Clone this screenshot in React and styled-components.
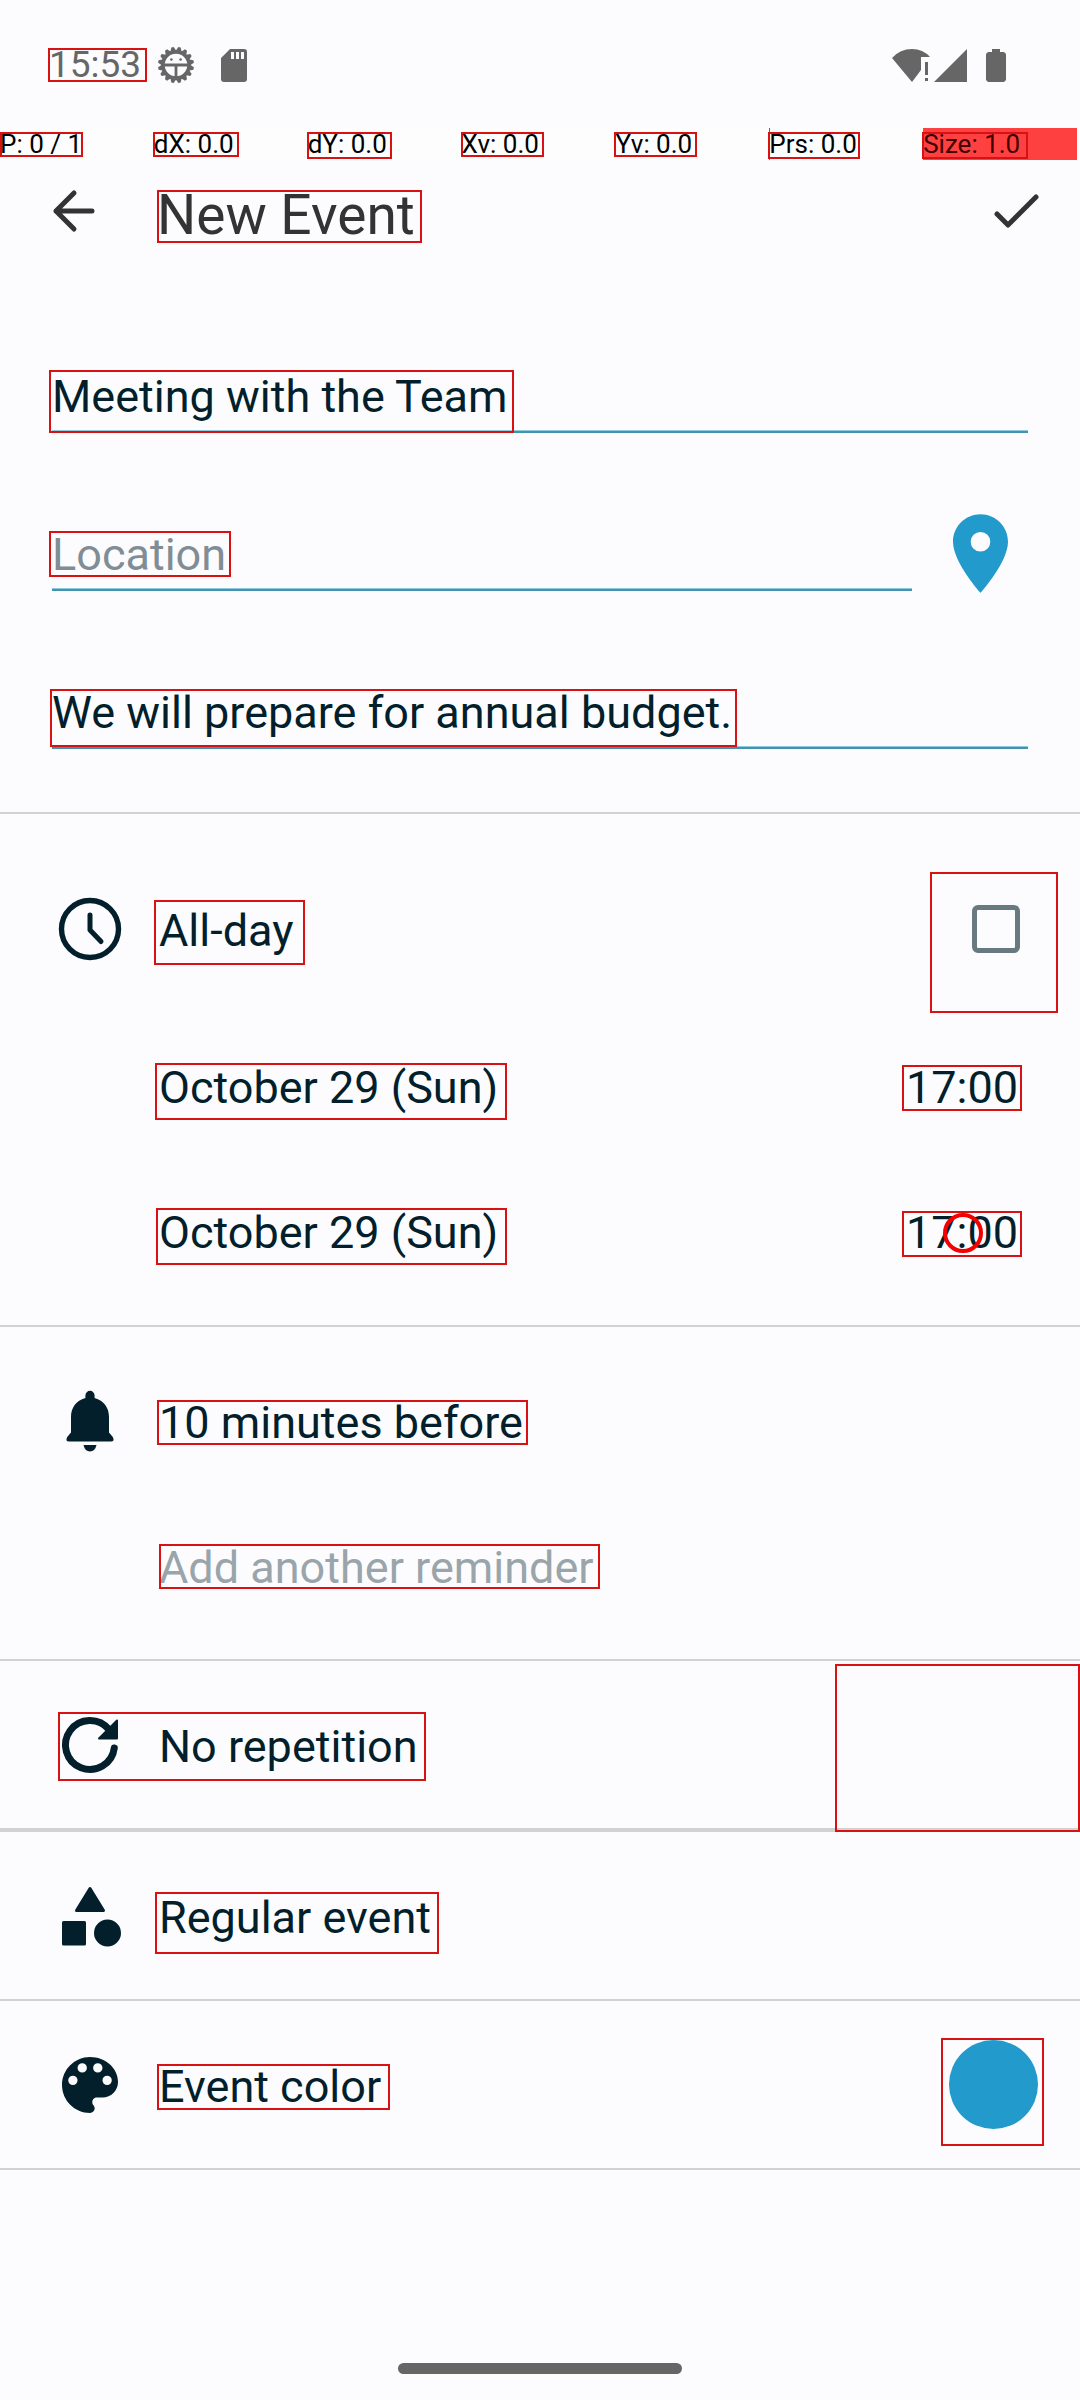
import React, { useState } from "react";
import styled, { createGlobalStyle } from "styled-components";

const ink = "#021f2b";
const accent = "#229acb";
const system = "#666666";
const line = "#d2d2d4";
const highlight = "#d81212";

const GlobalStyle = createGlobalStyle`
  * { box-sizing: border-box; }
  body {
    margin: 0;
    background: #fcfcff;
    color: ${ink};
    font-family: Roboto, "Liberation Sans", sans-serif;
  }
  button, input { font: inherit; color: inherit; }
`;

const Screen = styled.div`
  display: flex;
  flex-direction: column;
  min-height: 100vh;
`;

/* Outline laid over the element that contains it. */
const Mark = styled.span`
  position: absolute;
  inset: ${(p) => p.$inset};
  width: ${(p) => (p.$width ? `${p.$width}px` : "auto")};
  border: 2px solid ${highlight};
  pointer-events: none;
`;

const StatusBar = styled.header`
  display: flex;
  align-items: center;
  justify-content: space-between;
  height: 128px;
  padding: 2px 74px 0 49px;
  color: ${system};
`;

const StatusGroup = styled.div`
  display: flex;
  align-items: center;
  gap: ${(p) => p.$gap}px;
`;

const Clock = styled.time`
  position: relative;
  font-size: 37px;
  line-height: 44px;
`;

const PointerBar = styled.div`
  display: grid;
  grid-template-columns: repeat(7, 1fr);
  height: 32px;
  padding-right: 3px;
  background: #fdfdfe;
  color: #000;
  font-size: 26px;
  line-height: 32px;
`;

const PointerCell = styled.div`
  background: ${(p) => (p.$full ? "#ff4040" : "transparent")};
  color: ${(p) => (p.$full ? "#400000" : "inherit")};
  box-shadow: ${(p) => (p.$edge ? "inset 1px 0 #c04040" : "none")};
`;

const PointerText = styled.span`
  position: relative;
  display: inline-block;
`;

const AppBar = styled.div`
  display: flex;
  align-items: center;
  height: 102px;
  padding: 0 32px 0 42px;
  color: #333;
`;

const IconButton = styled.button`
  display: grid;
  place-items: center;
  width: 64px;
  height: 64px;
  padding: 0;
  border: 0;
  background: none;
`;

const Title = styled.h1`
  position: relative;
  margin: 8px auto 0 51px;
  font-size: 55px;
  font-weight: 400;
  line-height: 64px;
`;

const Form = styled.form`
  display: flex;
  flex-direction: column;
`;

const Fields = styled.div`
  display: flex;
  flex-direction: column;
  gap: 95px;
  padding: 108px 52px 63px;
  border-bottom: 2px solid ${line};
`;

const FieldRow = styled.div`
  display: flex;
  gap: 20px;
`;

const Field = styled.label`
  position: relative;
  display: block;
  flex: 1;
`;

const TextInput = styled.input`
  display: block;
  width: 100%;
  height: 63px;
  padding: 0 0 8px;
  border: 0;
  border-bottom: 2px solid #4392b0;
  box-shadow: inset 0 -1px #8fcade;
  border-radius: 0;
  outline: 0;
  background: none;
  font-size: 45px;
  line-height: 52px;
  &::placeholder { color: #808d94; opacity: 1; }
`;

const PinButton = styled.button`
  display: grid;
  place-items: center;
  width: 96px;
  height: 79px;
  margin: -14px 0 -2px;
  padding: 0;
  border: 0;
  background: none;
  color: ${accent};
`;

const Section = styled.section`
  display: flex;
  flex-direction: column;
  padding: ${(p) => p.$pad || "0"};
  border-bottom: ${(p) => (p.$thick ? 4 : 2)}px solid ${line};
`;

const Row = styled.div`
  position: relative;
  display: flex;
  align-items: center;
  justify-content: space-between;
  height: ${(p) => p.$height || 145}px;
  padding: 0 ${(p) => p.$end || 62}px 0 58px;
`;

const Lead = styled.div`
  position: relative;
  display: grid;
  grid-template-columns: 64px auto;
  column-gap: 37px;
  align-items: center;
  height: 64px;
`;

const textStyle = `
  position: relative;
  display: block;
  grid-column: 2;
  margin: 4px 0 0;
  padding: 0;
  border: 0;
  background: none;
  font-size: 45px;
  line-height: 52px;
  text-align: left;
  white-space: nowrap;
`;

const RowLabel = styled.label`
  ${textStyle}
`;

const RowButton = styled.button`
  ${textStyle}
  color: ${(p) => (p.$muted ? "#99a5aa" : ink)};
`;

const CheckWrap = styled.span`
  position: relative;
  display: block;
`;

const Checkbox = styled.input`
  display: block;
  appearance: none;
  width: 48px;
  height: 48px;
  margin: 0;
  border: 5px solid #687980;
  border-radius: 6px;
  &:checked { background: ${accent}; }
`;

const Touch = styled.span`
  position: absolute;
  top: 6px;
  left: 37px;
  width: 40px;
  height: 40px;
  border: 4px solid #f40000;
  border-radius: 50%;
  pointer-events: none;
`;

const Swatch = styled.button`
  position: relative;
  width: 89px;
  height: 89px;
  padding: 0;
  border: 0;
  border-radius: 50%;
  background: ${accent};
`;

const HomeArea = styled.footer`
  display: flex;
  justify-content: center;
  margin-top: auto;
  padding: 26px;
`;

const HomeBar = styled.div`
  width: 284px;
  height: 11px;
  border-radius: 6px;
  background: ${system};
`;

const teeth = Array.from({ length: 16 }, (_, i) => i * 22.5 + 11.25);

const BugIcon = () => (
  <svg width="38" height="38" viewBox="-19 -19 38 38" fill="none" stroke="currentColor" aria-hidden="true">
    {teeth.map((a) => (
      <path key={a} d="M-3.4 -13L-1.2 -18H1.2L3.4 -13Z" fill="currentColor" stroke="none" transform={`rotate(${a})`} />
    ))}
    <circle r="13" strokeWidth="3.4" />
    <path d="M-13 0H13M0 0V13" strokeWidth="2.8" />
    <circle cx="-4.6" cy="-5.5" r="1.3" fill="currentColor" stroke="none" />
    <circle cx="4.6" cy="-5.5" r="1.3" fill="currentColor" stroke="none" />
  </svg>
);

const SdIcon = () => (
  <svg width="26" height="33" viewBox="0 0 26 33" aria-hidden="true">
    <path
      fill="currentColor"
      fillRule="evenodd"
      d="M9 0H23Q26 0 26 3V30Q26 33 23 33H3Q0 33 0 30V9ZM10 3V10H13V3ZM15 3V10H18V3ZM20 3V10H23V3Z"
    />
  </svg>
);

const NetworkIcon = () => (
  <svg width="76" height="33" viewBox="0 0 76 33" fill="currentColor" aria-hidden="true">
    <path d="M0 9Q8 0 20 0Q31 0 38 8H29V21L20 33Z" />
    <path d="M33 13H36V26H33ZM33 29H36V32H33Z" />
    <path d="M75 0V33H42Z" />
  </svg>
);

const BatteryIcon = () => (
  <svg width="20" height="33" viewBox="0 0 20 33" fill="currentColor" aria-hidden="true">
    <path d="M6 0H14V3H18L20 5V31L18 33H2L0 31V5L2 3H6Z" />
  </svg>
);

const BackIcon = () => (
  <svg width="64" height="64" viewBox="0 0 64 64" fill="none" stroke="currentColor" strokeWidth="5" strokeLinecap="round" strokeLinejoin="round" aria-hidden="true">
    <path d="M50 32H14M32 14L14 32L32 50" />
  </svg>
);

const CheckIcon = () => (
  <svg width="64" height="64" viewBox="0 0 64 64" fill="none" stroke="currentColor" strokeWidth="5" strokeLinecap="round" strokeLinejoin="round" aria-hidden="true">
    <path d="M13 35L24 46L52 18" />
  </svg>
);

const PinIcon = () => (
  <svg width="55" height="79" viewBox="5 2 14 20" fill="currentColor" aria-hidden="true">
    <path fillRule="evenodd" d="M12 2C8.13 2 5 5.13 5 9c0 5.25 7 13 7 13s7-7.75 7-13c0-3.87-3.13-7-7-7zm0 9.5a2.5 2.5 0 0 1 0-5 2.5 2.5 0 0 1 0 5z" />
  </svg>
);

const ClockIcon = () => (
  <svg width="64" height="64" viewBox="0 0 64 64" fill="none" stroke="currentColor" strokeWidth="5" strokeLinecap="round" strokeLinejoin="round" aria-hidden="true">
    <circle cx="32" cy="32" r="28.5" strokeWidth="5.4" />
    <path d="M32 18V33L43 44.5" />
  </svg>
);

const BellIcon = () => (
  <svg width="64" height="64" viewBox="0 0 64 64" fill="currentColor" aria-hidden="true">
    <path d="M27.4 9V6.4A4.6 4.6 0 0 1 36.6 6.4V9C46 11.500 51 19 51 28V43.500L54.800 48Q57 52.500 53 52.500H11Q7 52.500 9.200 48L13 43.500V28C13 19 18 11.500 27.400 9Z" />
    <path d="M25.500 56H38.500Q37 62.500 32 62.500Q27 62.500 25.500 56Z" />
  </svg>
);

const RepeatIcon = () => (
  <svg width="64" height="64" viewBox="0 0 64 64" fill="none" stroke="currentColor" strokeLinecap="round" strokeLinejoin="round" aria-hidden="true">
    <path strokeWidth="7" d="M56.300 35A24.500 24.500 0 1 1 51 16.500" />
    <path fill="currentColor" strokeWidth="2" d="M59 7.500V25.500H41Z" />
  </svg>
);

const ShapesIcon = () => (
  <svg width="64" height="64" viewBox="0 0 64 64" fill="currentColor" stroke="currentColor" strokeWidth="3" strokeLinejoin="round" aria-hidden="true">
    <path d="M32 4.500L45.500 26.500H18.500ZM5.500 38.500H26.500V60H5.500Z" />
    <circle cx="49.500" cy="49" r="12" />
  </svg>
);

const PaletteIcon = () => (
  <svg width="64" height="64" viewBox="1.71 1.71 20.57 20.57" fill="currentColor" aria-hidden="true">
    <path
      fillRule="evenodd"
      d="M12 3c-4.970 0-9 4.030-9 9s4.030 9 9 9c.83 0 1.500-.67 1.500-1.500 0-.39-.15-.74-.39-1.010-.23-.26-.38-.61-.38-.99 0-.83.67-1.500 1.500-1.500H16c2.760 0 5-2.240 5-5 0-4.420-4.030-8-9-8zM6.500 12a1.500 1.500 0 1 1 0-3 1.500 1.500 0 0 1 0 3zM9.500 8a1.500 1.500 0 1 1 0-3 1.500 1.500 0 0 1 0 3zM14.500 8a1.500 1.500 0 1 1 0-3 1.500 1.500 0 0 1 0 3zM17.500 12a1.500 1.500 0 1 1 0-3 1.500 1.500 0 0 1 0 3z"
    />
  </svg>
);

const pointer = [
  { text: "P: 0 / 1", inset: "4px -1px 3px 0" },
  { text: "dX: 0.0", inset: "4px -5px 3px -1px" },
  { text: "dY: 0.0", inset: "4px -5px 1px -1px" },
  { text: "Xv: 0.0", inset: "4px -5px 3px -1px" },
  { text: "Yv: 0.0", inset: "4px -5px 3px -1px" },
  { text: "Prs: 0.0", inset: "4px -3px 1px -1px", edge: true },
  { text: "Size: 1.0", inset: "4px -8px 1px -1px", full: true },
];

export default function App() {
  const [title, setTitle] = useState("Meeting with the Team");
  const [location, setLocation] = useState("");
  const [notes, setNotes] = useState("We will prepare for annual budget.");

  return (
    <Screen>
      <GlobalStyle />
      <StatusBar>
        <StatusGroup $gap={26}>
          <StatusGroup $gap={16}>
            <Clock>
              15:53
              <Mark $inset="5px -6px 5px -1px" />
            </Clock>
            <BugIcon />
          </StatusGroup>
          <SdIcon />
        </StatusGroup>
        <StatusGroup $gap={18}>
          <NetworkIcon />
          <BatteryIcon />
        </StatusGroup>
      </StatusBar>

      <PointerBar>
        {pointer.map((p) => (
          <PointerCell key={p.text} $full={p.full} $edge={p.edge}>
            <PointerText>
              {p.text}
              <Mark $inset={p.inset} />
            </PointerText>
          </PointerCell>
        ))}
      </PointerBar>

      <AppBar>
        <IconButton type="button" aria-label="Back">
          <BackIcon />
        </IconButton>
        <Title>
          New Event
          <Mark $inset="7px -7px 4px 0" />
        </Title>
        <IconButton type="submit" form="event" aria-label="Save">
          <CheckIcon />
        </IconButton>
      </AppBar>

      <Form id="event" onSubmit={(e) => e.preventDefault()}>
        <Fields>
          <FieldRow>
            <Field>
              <TextInput aria-label="Title" value={title} onChange={(e) => setTitle(e.target.value)} />
              <Mark $inset="0 auto 0 -3px" $width={465} />
            </Field>
          </FieldRow>
          <FieldRow>
            <Field>
              <TextInput aria-label="Location" placeholder="Location" value={location} onChange={(e) => setLocation(e.target.value)} />
              <Mark $inset="3px auto 14px -3px" $width={182} />
            </Field>
            <PinButton type="button" aria-label="Show on map">
              <PinIcon />
            </PinButton>
          </FieldRow>
          <FieldRow>
            <Field>
              <TextInput aria-label="Description" value={notes} onChange={(e) => setNotes(e.target.value)} />
              <Mark $inset="3px auto 2px -2px" $width={687} />
            </Field>
          </FieldRow>
        </Fields>

        <Section $pad="31px 0 22px">
          <Row $height={168} $end={60}>
            <Lead>
              <ClockIcon />
              <RowLabel htmlFor="all-day">
                All-day
                <Mark $inset="-5px -11px -8px -5px" />
              </RowLabel>
            </Lead>
            <CheckWrap>
              <Checkbox id="all-day" type="checkbox" />
              <Mark $inset="-33px -38px -60px -42px" />
            </CheckWrap>
          </Row>
          <Row>
            <Lead>
              <RowButton type="button">
                October 29 (Sun)
                <Mark $inset="1px -9px -6px -4px" />
              </RowButton>
            </Lead>
            <RowButton type="button">
              17:00
              <Mark $inset="3px -4px 3px -4px" />
            </RowButton>
          </Row>
          <Row>
            <Lead>
              <RowButton type="button">
                October 29 (Sun)
                <Mark $inset="1px -9px -6px -3px" />
              </RowButton>
            </Lead>
            <RowButton type="button">
              17:00
              <Mark $inset="4px -4px 2px -4px" />
              <Touch />
            </RowButton>
          </Row>
        </Section>

        <Section $pad="21px 0">
          <Row>
            <Lead>
              <BellIcon />
              <RowButton type="button">
                10 minutes before
                <Mark $inset="3px -5px 4px -2px" />
              </RowButton>
            </Lead>
          </Row>
          <Row>
            <Lead>
              <RowButton type="button" $muted>
                Add another reminder
                <Mark $inset="2px -6px 5px 0" />
              </RowButton>
            </Lead>
          </Row>
        </Section>

        <Section $thick>
          <Row $height={167}>
            <Lead>
              <RepeatIcon />
              <RowButton type="button">No repetition</RowButton>
              <Mark $inset="-1px -8px -4px 0" />
            </Lead>
            <Mark $inset="3px 0 -4px auto" $width={245} />
          </Row>
        </Section>

        <Section>
          <Row $height={167}>
            <Lead>
              <ShapesIcon />
              <RowButton type="button">
                Regular event
                <Mark $inset="0 -8px -10px -4px" />
              </RowButton>
            </Lead>
          </Row>
        </Section>

        <Section>
          <Row $height={167} $end={42}>
            <Lead>
              <PaletteIcon />
              <RowButton type="button">
                Event color
                <Mark $inset="3px -9px 3px -2px" />
              </RowButton>
            </Lead>
            <Swatch type="button" aria-label="Pick event color">
              <Mark $inset="-2px -6px -17px -8px" />
            </Swatch>
          </Row>
        </Section>
      </Form>

      <HomeArea>
        <HomeBar />
      </HomeArea>
    </Screen>
  );
}
